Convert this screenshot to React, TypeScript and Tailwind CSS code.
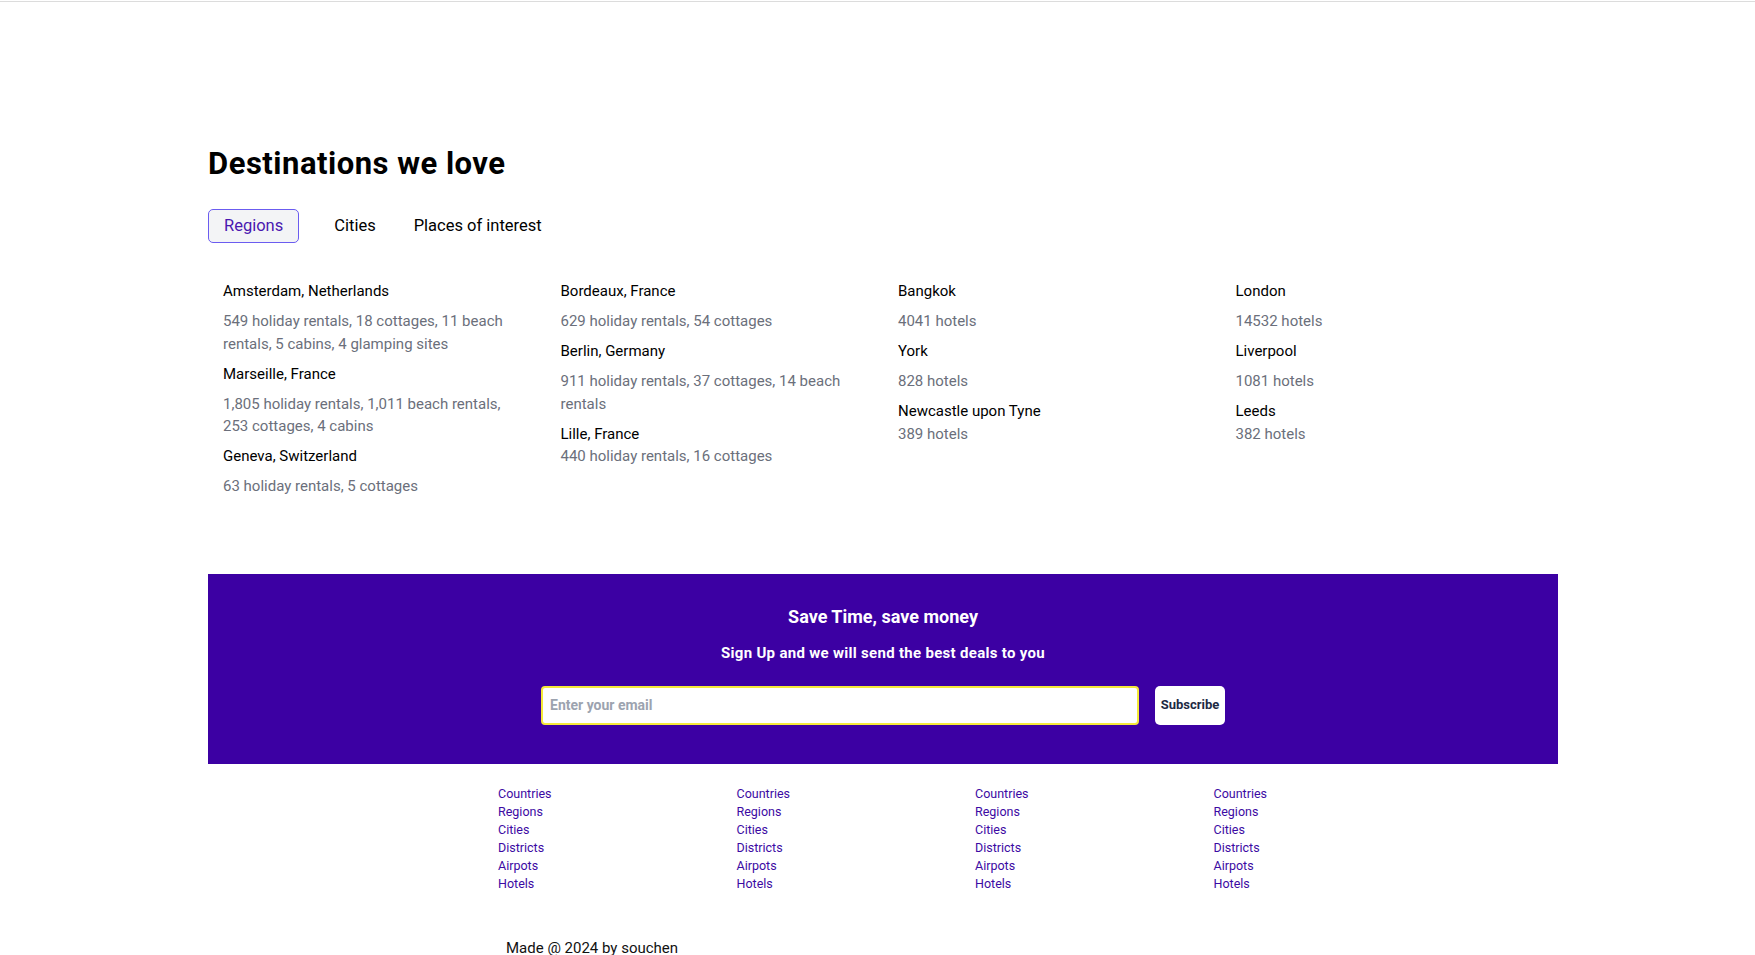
import React from "react";

interface Place {
  name: string;
  info: string;
  tight?: boolean;
}

const columns: Place[][] = [
  [
    { name: "Amsterdam, Netherlands", info: "549 holiday rentals, 18 cottages, 11 beach rentals, 5 cabins, 4 glamping sites" },
    { name: "Marseille, France", info: "1,805 holiday rentals, 1,011 beach rentals, 253 cottages, 4 cabins" },
    { name: "Geneva, Switzerland", info: "63 holiday rentals, 5 cottages" },
  ],
  [
    { name: "Bordeaux, France", info: "629 holiday rentals, 54 cottages" },
    { name: "Berlin, Germany", info: "911 holiday rentals, 37 cottages, 14 beach rentals" },
    { name: "Lille, France", info: "440 holiday rentals, 16 cottages", tight: true },
  ],
  [
    { name: "Bangkok", info: "4041 hotels" },
    { name: "York", info: "828 hotels" },
    { name: "Newcastle upon Tyne", info: "389 hotels", tight: true },
  ],
  [
    { name: "London", info: "14532 hotels" },
    { name: "Liverpool", info: "1081 hotels" },
    { name: "Leeds", info: "382 hotels", tight: true },
  ],
];

const links = ["Countries", "Regions", "Cities", "Districts", "Airpots", "Hotels"];

export default function App() {
  return (
    <div className="min-h-screen bg-white font-['Roboto',sans-serif] text-black">
      <div className="mt-[1px] h-[1px] bg-[#dcdcdc]" />

      <div className="ml-[208px] w-[1350px]">
        {/* Destinations */}
        <h1 className="mt-[144px] text-[31px] font-bold leading-[36px] tracking-[0.5px] text-black">
          Destinations we love
        </h1>

        <div className="mt-[27px] flex items-center text-[16.5px] leading-[24px]">
          <button className="h-[34px] rounded-[5px] border border-[#6b5cf0] bg-[#f3f4f6] px-[15px] text-[#4a17b0]">
            Regions
          </button>
          <span className="ml-[35px]">Cities</span>
          <span className="ml-[38px]">Places of interest</span>
        </div>

        <div className="mt-[37px] grid grid-cols-4 text-[15px] leading-[22.5px]">
          {columns.map((col, ci) => (
            <div key={ci} className="flex flex-col px-[15px]">
              {col.map((p, pi) => (
                <div key={pi} className={pi > 0 ? "mt-[7.5px]" : ""}>
                  <p className="text-black">{p.name}</p>
                  <p className={`${p.tight ? "" : "mt-[7.5px]"} pr-[10px] text-[#6b6f7b]`}>{p.info}</p>
                </div>
              ))}
            </div>
          ))}
        </div>

        {/* Newsletter */}
        <div className="mt-[76px] flex h-[190px] flex-col items-center bg-[#3c00a3] pt-[31px] text-white">
          <h2 className="text-[18px] font-bold leading-[24px]">Save Time, save money</h2>
          <p className="mt-[14px] text-[15px] font-bold leading-[20px] tracking-[0.3px]">
            Sign Up and we will send the best deals to you
          </p>
          <div className="mt-[23px] flex">
            <input
              type="email"
              placeholder="Enter your email"
              className="h-[39px] w-[598px] rounded-[4px] border-2 border-[#f5e93a] bg-white px-[7px] text-[14px] font-bold text-black outline-none placeholder:text-[#9ca3af]"
            />
            <button className="ml-[16px] h-[39px] w-[70px] rounded-[5px] bg-white text-[13px] font-bold text-[#1e2a44]">
              Subscribe
            </button>
          </div>
        </div>

        {/* Footer links */}
        <div className="ml-[290px] mt-[21px] grid w-[954px] grid-cols-4 text-[12.5px] leading-[18px] text-[#3c0aa3]">
          {[0, 1, 2, 3].map((c) => (
            <ul key={c}>
              {links.map((l) => (
                <li key={l}>
                  <a href="#">{l}</a>
                </li>
              ))}
            </ul>
          ))}
        </div>

        <p className="ml-[298px] mt-[43px] text-[15px] leading-[24px] text-[#111]">Made @ 2024 by souchen</p>
      </div>
    </div>
  );
}
